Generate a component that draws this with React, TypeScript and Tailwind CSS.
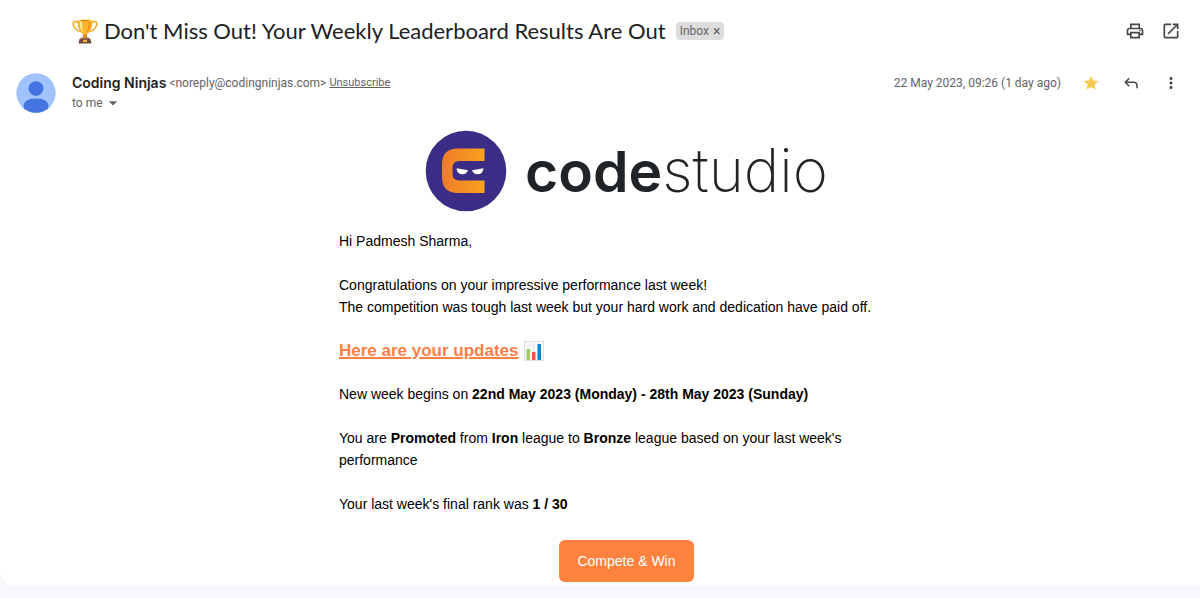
import type { ReactNode } from 'react';
import { MdArrowDropDown, MdMoreVert, MdOpenInNew, MdOutlinePrint, MdStar } from 'react-icons/md';

function Trophy() {
  return (
    <svg viewBox="0 0 26 26" className="h-[26px] w-[26px] shrink-0" role="img" aria-label="Trophy">
      <path d="M6 4.5C3 2.5.8 3.5 1.3 6.5 1.8 10 5 13 9.5 13.5M20 4.5c3-2 5.2-1 4.7 2-.5 3.500-3.700 6.500-8.200 7" fill="none" stroke="#f9a41c" strokeWidth="1.600" />
      <path d="M11.300 14h3.400l.6 7h-4.600z" fill="#e58a13" />
      <path d="M5.500 2.500h15C20.500 10 18 16.500 13 16.500S5.500 10 5.500 2.500z" fill="#fbb62c" />
      <path d="M8 4c0 5 1 8.500 3.500 10.500C9.800 11 9.700 7 10 4z" fill="#fff0b0" />
      <path d="M18.500 4c0 5-1.500 9-4 11 1.500-3 2-7 2-11z" fill="#f28f16" />
      <ellipse cx="13" cy="2.700" rx="7.500" ry="1.500" fill="#ffd45c" />
      <ellipse cx="13" cy="2.800" rx="5.600" ry=".8" fill="#d98614" />
      <path d="M9 19.500h8l1 2H8z" fill="#9b6758" />
      <path d="M7.500 21h11l1 4.500h-13z" fill="#70483f" />
      <rect x="11" y="21.800" width="4" height="2.200" fill="#f5b83b" />
    </svg>
  );
}

function BarChart() {
  return (
    <svg viewBox="0 0 20 20" className="h-5 w-5 shrink-0" role="img" aria-label="Bar chart">
      <rect x=".5" y=".5" width="19" height="19" fill="#fafafa" stroke="#dce1e5" />
      <path d="M1 5h18M1 10h18M1 15h18M5.500 1v18M10 1v18M14.500 1v18" stroke="#dde5ea" strokeWidth=".6" />
      <rect x="2.500" y="8" width="3.500" height="11" fill="#9ccc65" />
      <rect x="8" y="11" width="3.500" height="8" fill="#f1564b" />
      <rect x="13.500" y="3" width="3.500" height="16" fill="#0288d1" />
    </svg>
  );
}

function Avatar() {
  return (
    <svg viewBox="0 0 40 40" className="h-10 w-10 shrink-0" role="img" aria-label="Sender profile">
      <defs>
        <clipPath id="avatar-circle">
          <circle cx="20" cy="20" r="19.700" />
        </clipPath>
      </defs>
      <g clipPath="url(#avatar-circle)">
        <rect width="40" height="40" fill="#a0c3ff" />
        <circle cx="20" cy="15.600" r="7.400" fill="#4374e0" />
        <path d="M7.500 34c0-5.500 4-8.500 12.500-8.500S32.500 28.500 32.500 34v6h-25z" fill="#4374e0" />
      </g>
    </svg>
  );
}

function NinjaMark() {
  return (
    <svg viewBox="0 0 82 82" className="h-[82px] w-[82px] shrink-0" aria-hidden="true">
      <defs>
        <linearGradient id="mark-orange" x1="0" x2="1">
          <stop offset="0" stopColor="#ef7b2b" />
          <stop offset="1" stopColor="#faa31c" />
        </linearGradient>
      </defs>
      <circle cx="41" cy="41" r="40.300" fill="#3b2c86" />
      <path d="M59.500 18.500H33Q17 18.500 17 34.500V47Q17 63 33 63H59.500V50.500H34.500Q27.500 50.500 27.500 43.500V38Q27.500 31 34.500 31H59.500Z" fill="url(#mark-orange)" />
      <path d="M31.500 38.300 43 40.300Q41.500 44.300 37.500 44.300 32 44.300 31.500 38.300ZM58.500 38.300 47 40.300Q48.500 44.300 52.500 44.300 58 44.300 58.500 38.300Z" fill="#fff" />
    </svg>
  );
}

function ReplyIcon() {
  return (
    <svg viewBox="0 0 24 24" className="h-[18px] w-[18px]" fill="currentColor" aria-hidden="true">
      <path d="M19 19v-4q0-1.250-.875-2.125T16 12H6.800l3.600 3.600L9 17l-6-6 6-6 1.400 1.400L6.800 10H16q2.100 0 3.550 1.450T21 15v4z" />
    </svg>
  );
}

function IconButton({ label, children }: { label: string; children: ReactNode }) {
  return (
    <button type="button" aria-label={label} className="flex h-5 w-5 items-center justify-center text-[#444746]">
      {children}
    </button>
  );
}

export default function App() {
  return (
    <div className="min-h-screen bg-[#f6f8fc] pb-3 font-['Roboto',sans-serif] text-[#202124]">
      <main className="rounded-bl-2xl bg-white pb-1">
        <header className="flex h-[62px] items-center pr-[19px] pl-[72px]">
          <Trophy />
          <h1 className="ml-[6px] font-['Lato',sans-serif] text-[22px] leading-8 whitespace-nowrap">
            Don't Miss Out! Your Weekly Leaderboard Results Are Out
          </h1>
          <span className="ml-[10px] flex h-[18px] items-center gap-1 rounded bg-[#ddd] px-1 text-xs text-[#666]">
            Inbox
            <button type="button" aria-label="Remove Inbox label" className="text-sm leading-4">×</button>
          </span>
          <div className="ml-auto flex gap-4">
            <IconButton label="Print"><MdOutlinePrint size={20} /></IconButton>
            <IconButton label="Open in new window"><MdOpenInNew size={20} /></IconButton>
          </div>
        </header>

        <section className="flex items-start pt-[11px] pr-[19px] pl-4">
          <Avatar />
          <div className="ml-4">
            <div className="flex items-center text-xs leading-5 whitespace-nowrap text-[#5f6368]">
              <h2 className="font-['Inter',sans-serif] text-sm leading-5 font-semibold text-[#1f1f1f]">Coding Ninjas</h2>
              <span className="ml-[3px]">&lt;noreply@codingninjas.com&gt;</span>
              <a href="#unsubscribe" className="ml-[3px] text-[11px] underline">Unsubscribe</a>
            </div>
            <button type="button" className="flex items-center text-xs leading-5 text-[#5f6368]">
              to me <MdArrowDropDown size={20} />
            </button>
          </div>
          <div className="ml-auto flex items-center">
            <time className="text-xs leading-5 whitespace-nowrap text-[#5f6368]">22 May 2023, 09:26 (1 day ago)</time>
            <div className="ml-5 flex gap-5">
              <button type="button" aria-label="Starred" className="flex h-5 w-5 items-center justify-center text-[#f7cb4d]"><MdStar size={18} /></button>
              <IconButton label="Reply"><ReplyIcon /></IconButton>
              <IconButton label="More"><MdMoreVert size={18} /></IconButton>
            </div>
          </div>
        </section>

        <div className="pt-4 pr-[19px] pl-[72px]">
          <article className="mx-auto max-w-[575px] font-['Liberation_Sans',sans-serif] text-sm leading-[22px] text-black">
            <div className="flex items-center justify-center font-['Inter',sans-serif] leading-[82px] text-[#202426]">
              <NinjaMark />
              <div className="ml-[18px] flex items-baseline">
                <span className="text-[57px] leading-[82px] font-semibold">code</span>
                <span className="text-[60px] leading-[82px] font-extralight">studio</span>
              </div>
            </div>
            <div className="flex flex-col gap-[22px] pt-[17px]">
              <p>Hi Padmesh Sharma,</p>
              <p>
                Congratulations on your impressive performance last week!<br />
                The competition was tough last week but your hard work and dedication have paid off.
              </p>
              <h3 className="flex items-center gap-[5px] text-[17px] leading-[21px] font-bold text-[#ff7f45]">
                <a href="#updates" className="underline decoration-2">Here are your updates</a>
                <BarChart />
              </h3>
              <p>New week begins on <b>22nd May 2023 (Monday) - 28th May 2023 (Sunday)</b></p>
              <p>
                You are <b>Promoted</b> from <b>Iron</b> league to <b>Bronze</b> league based on your last week's<br />
                performance
              </p>
              <p>Your last week's final rank was <b>1 / 30</b></p>
            </div>
            <div className="flex justify-center pt-[25px]">
              <button type="button" className="h-[42px] rounded-md bg-[#ff823f] px-[18px] text-white">Compete &amp; Win</button>
            </div>
          </article>
        </div>
      </main>
    </div>
  );
}
